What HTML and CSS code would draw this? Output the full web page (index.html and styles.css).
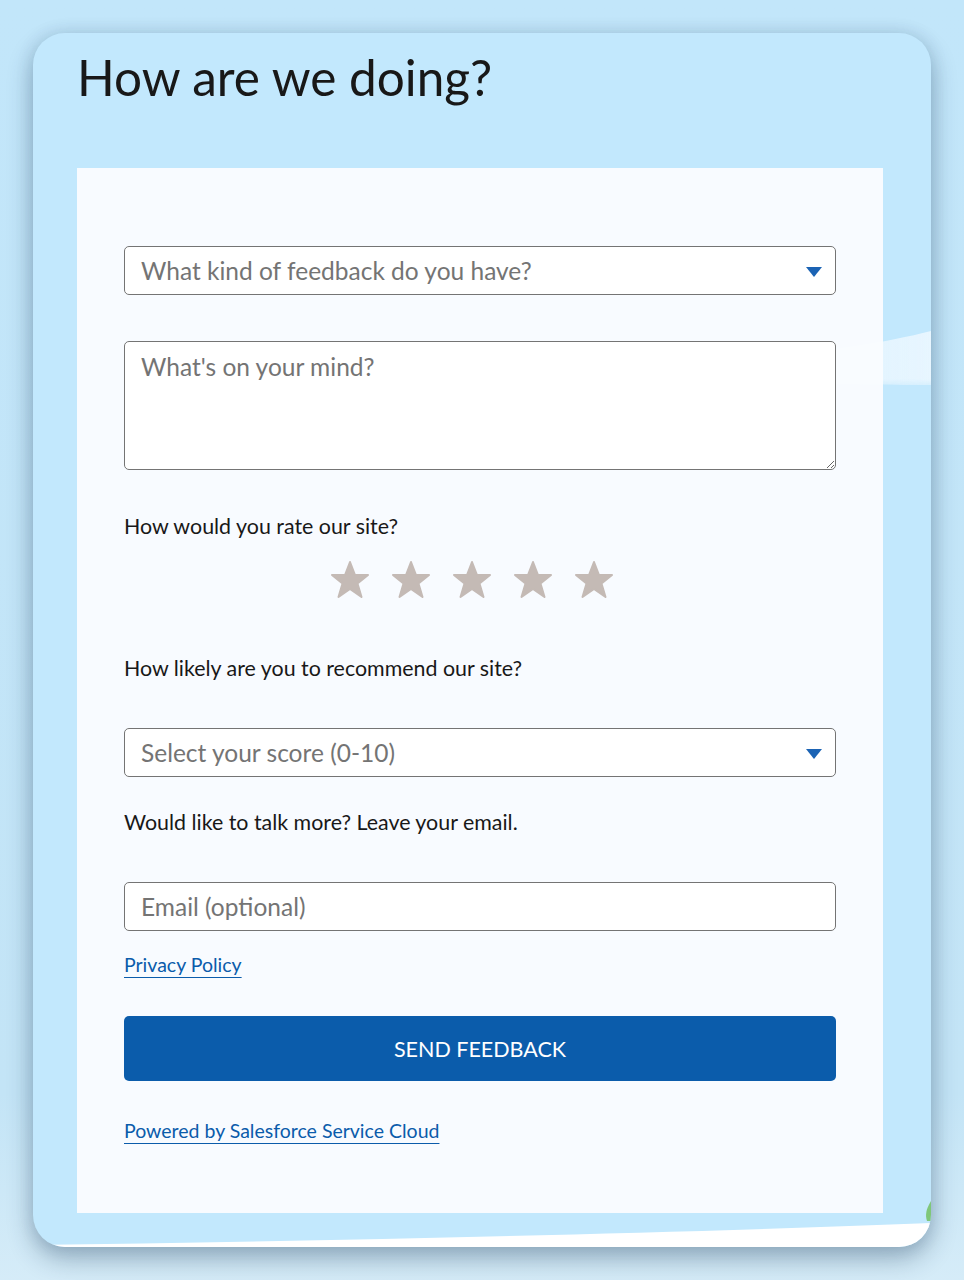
FILE: index.html
```html
<!DOCTYPE html>
<html lang="en">
<head>
    <meta charset="UTF-8">
    <meta name="viewport" content="width=device-width, initial-scale=1.0">
    <title>How are we doing?</title>
    <link rel="stylesheet" href="styles.css">
</head>
<body>

    <div class="card">
        <!-- background streaks -->
        <svg class="card-bg" width="898" height="1214" viewBox="0 0 898 1214">
            <defs>
                <linearGradient id="streak" x1="0" y1="0" x2="1" y2="0">
                    <stop offset="0" stop-color="#ffffff" stop-opacity="0"/>
                    <stop offset="0.75" stop-color="#eef8ff" stop-opacity="0.7"/>
                    <stop offset="1" stop-color="#eef8ff" stop-opacity="0.85"/>
                </linearGradient>
                <linearGradient id="streakV" x1="0" y1="0" x2="0" y2="1">
                    <stop offset="0" stop-color="#ffffff" stop-opacity="1"/>
                    <stop offset="0.8" stop-color="#ffffff" stop-opacity="1"/>
                    <stop offset="1" stop-color="#ffffff" stop-opacity="0"/>
                </linearGradient>
                <mask id="fade">
                    <rect x="0" y="290" width="898" height="70" fill="url(#streakV)"/>
                </mask>
            </defs>
            <path d="M560 340 C 700 330, 820 318, 898 298 L 898 352 C 820 352, 700 348, 560 346 Z" fill="url(#streak)" mask="url(#fade)"/>
            <path d="M0 1214 L 0 1212 C 300 1208, 650 1200, 898 1190 L 898 1214 Z" fill="#ffffff"/>
            <path d="M894 1188 C 892 1182, 893 1176, 898 1168 L 898 1188 Z" fill="#7fc77a"/>
        </svg>

        <h1 class="title">How are we doing?</h1>

        <form class="panel">
            <div class="select-wrap first">
                <select class="field select">
                    <option>What kind of feedback do you have?</option>
                </select>
                <svg class="arrow" width="16" height="10" viewBox="0 0 16 10"><path d="M0 0 H16 L8 10 Z" fill="#1b63b4"/></svg>
            </div>

            <textarea class="field area" placeholder="What's on your mind?"></textarea>

            <p class="label rate-label">How would you rate our site?</p>
            <div class="stars">
                <svg class="star" width="40" height="40" viewBox="0 0 40 40"><path d="M20 2 L25 15 L38 15 L27.5 23.5 L31.5 37 L20 29 L8.5 37 L12.5 23.5 L2 15 L15 15 Z" fill="#c4bab5" stroke="#c4bab5" stroke-width="2" stroke-linejoin="round"/></svg>
                <svg class="star" width="40" height="40" viewBox="0 0 40 40"><path d="M20 2 L25 15 L38 15 L27.5 23.5 L31.5 37 L20 29 L8.5 37 L12.5 23.5 L2 15 L15 15 Z" fill="#c4bab5" stroke="#c4bab5" stroke-width="2" stroke-linejoin="round"/></svg>
                <svg class="star" width="40" height="40" viewBox="0 0 40 40"><path d="M20 2 L25 15 L38 15 L27.5 23.5 L31.5 37 L20 29 L8.5 37 L12.5 23.5 L2 15 L15 15 Z" fill="#c4bab5" stroke="#c4bab5" stroke-width="2" stroke-linejoin="round"/></svg>
                <svg class="star" width="40" height="40" viewBox="0 0 40 40"><path d="M20 2 L25 15 L38 15 L27.5 23.5 L31.5 37 L20 29 L8.5 37 L12.5 23.5 L2 15 L15 15 Z" fill="#c4bab5" stroke="#c4bab5" stroke-width="2" stroke-linejoin="round"/></svg>
                <svg class="star" width="40" height="40" viewBox="0 0 40 40"><path d="M20 2 L25 15 L38 15 L27.5 23.5 L31.5 37 L20 29 L8.5 37 L12.5 23.5 L2 15 L15 15 Z" fill="#c4bab5" stroke="#c4bab5" stroke-width="2" stroke-linejoin="round"/></svg>
            </div>

            <p class="label nps-label">How likely are you to recommend our site?</p>
            <div class="select-wrap score">
                <select class="field select">
                    <option>Select your score (0-10)</option>
                </select>
                <svg class="arrow" width="16" height="10" viewBox="0 0 16 10"><path d="M0 0 H16 L8 10 Z" fill="#1b63b4"/></svg>
            </div>

            <p class="label email-label">Would like to talk more? Leave your email.</p>
            <input class="field email" type="email" placeholder="Email (optional)">

            <a class="link privacy" href="#">Privacy Policy</a>

            <button class="send-btn" type="submit">SEND FEEDBACK</button>

            <a class="link powered" href="#">Powered by Salesforce Service Cloud</a>
        </form>
    </div>

</body>
</html>
```

FILE: styles.css
```css
body {
    margin: 0;
    padding: 33px 33px 40px;
    background: linear-gradient(180deg, #c2e6fa 0%, #c3e4f6 85%, #d6ecf8 100%);
    font-family: Lato, "Open Sans", Arial, sans-serif;
    color: #181818;
}

.card {
    position: relative;
    width: 898px;
    height: 1214px;
    box-sizing: border-box;
    padding: 0 48px 0 44px;
    background-color: #c2e8fd;
    border-radius: 32px;
    overflow: hidden;
    box-shadow: 0 12px 26px rgba(20, 50, 80, 0.32), 0 0 18px rgba(20, 50, 80, 0.12);
}

.card-bg {
    position: absolute;
    top: 0;
    left: 0;
}

.title {
    position: relative;
    margin: 0;
    height: 135px;
    padding-top: 13px;
    box-sizing: border-box;
    font-size: 49.5px;
    font-weight: 400;
    line-height: 62px;
    color: #181818;
}

.panel {
    position: relative;
    display: flex;
    flex-direction: column;
    align-items: flex-start;
    height: 1045px;
    box-sizing: border-box;
    padding: 78px 47px 0;
    background-color: rgba(250, 252, 255, 0.96);
}

.field {
    width: 712px;
    box-sizing: border-box;
    margin: 0;
    border: 1px solid #747474;
    border-radius: 5px;
    background-color: #ffffff;
    font-family: Lato, "Open Sans", Arial, sans-serif;
    font-size: 24.5px;
    color: #706e6b;
    padding: 0 16px;
    outline: none;
}

.field::placeholder {
    color: #747474;
}

.select-wrap {
    position: relative;
}

.select {
    height: 49px;
    appearance: none;
    -webkit-appearance: none;
    color: #747474;
}

.arrow {
    position: absolute;
    right: 14px;
    top: 21px;
}

.area {
    height: 129px;
    margin-top: 46px;
    padding-top: 10px;
    resize: vertical;
}

.label {
    margin: 0;
    font-size: 21.4px;
    line-height: 28px;
}

.rate-label {
    margin-top: 42px;
}

.stars {
    display: flex;
    gap: 21px;
    margin-top: 20px;
    padding-left: 206px;
}

.nps-label {
    margin-top: 54px;
}

.score {
    margin-top: 46px;
}

.email-label {
    margin-top: 31px;
}

.email {
    height: 49px;
    margin-top: 46px;
}

.link {
    font-size: 19.5px;
    line-height: 28px;
    color: #0b5cab;
    text-decoration: underline;
    text-underline-offset: 5px;
    text-decoration-thickness: 1px;
}

.privacy {
    margin-top: 20px;
}

.send-btn {
    width: 712px;
    height: 65px;
    margin-top: 37px;
    border: none;
    border-radius: 5px;
    background-color: #0b5cab;
    color: #ffffff;
    font-family: Lato, "Open Sans", Arial, sans-serif;
    font-size: 21.5px;
    cursor: pointer;
}

.powered {
    margin-top: 36px;
}
```
